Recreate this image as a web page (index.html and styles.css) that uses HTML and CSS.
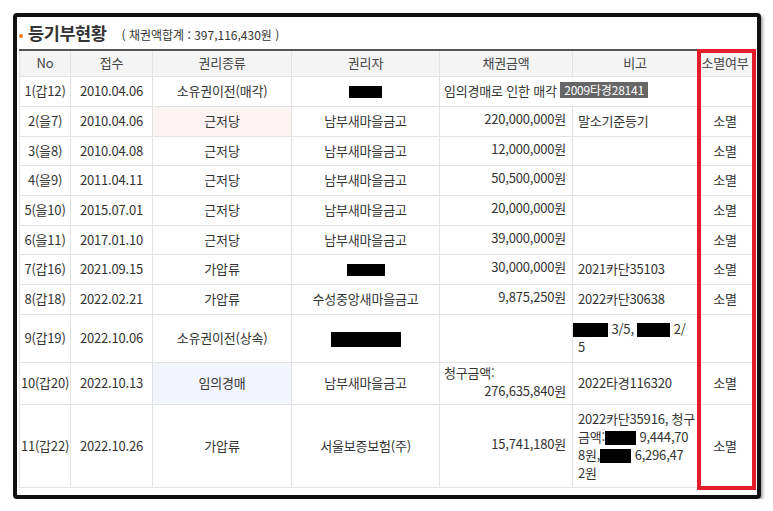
FILE: index.html
```html
<!DOCTYPE html>
<html lang="ko">
<head>
<meta charset="utf-8">
<title>등기부현황</title>
<link rel="stylesheet" href="styles.css">
</head>
<body>
<div class="frame">
  <div class="title">
    <span class="dot"></span>
    <h2 class="title-main">등기부현황</h2>
    <span class="title-sub">( 채권액합계 : 397,116,430원 )</span>
  </div>
  <table class="reg">
    <colgroup>
      <col class="c-no"><col class="c-date"><col class="c-kind"><col class="c-holder"><col class="c-amt"><col class="c-note"><col class="c-ext">
    </colgroup>
    <thead>
      <tr class="head"><th>No</th><th>접수</th><th>권리종류</th><th>권리자</th><th>채권금액</th><th>비고</th><th>소멸여부</th></tr>
    </thead>
    <tbody>
      <tr><td>1(갑12)</td><td>2010.04.06</td><td>소유권이전(매각)</td><td><span class="redact r1"></span></td><td colspan="2" class="left">임의경매로 인한 매각 <span class="badge">2009타경28141</span></td><td></td></tr>
      <tr><td>2(을7)</td><td>2010.04.06</td><td class="pink">근저당</td><td>남부새마을금고</td><td class="amt">220,000,000원</td><td class="note">말소기준등기</td><td>소멸</td></tr>
      <tr class="h29"><td>3(을8)</td><td>2010.04.08</td><td>근저당</td><td>남부새마을금고</td><td class="amt">12,000,000원</td><td class="note"></td><td>소멸</td></tr>
      <tr><td>4(을9)</td><td>2011.04.11</td><td>근저당</td><td>남부새마을금고</td><td class="amt">50,500,000원</td><td class="note"></td><td>소멸</td></tr>
      <tr><td>5(을10)</td><td>2015.07.01</td><td>근저당</td><td>남부새마을금고</td><td class="amt">20,000,000원</td><td class="note"></td><td>소멸</td></tr>
      <tr class="h29"><td>6(을11)</td><td>2017.01.10</td><td>근저당</td><td>남부새마을금고</td><td class="amt">39,000,000원</td><td class="note"></td><td>소멸</td></tr>
      <tr><td>7(갑16)</td><td>2021.09.15</td><td>가압류</td><td><span class="redact r7"></span></td><td class="amt">30,000,000원</td><td class="note">2021카단35103</td><td>소멸</td></tr>
      <tr><td>8(갑18)</td><td>2022.02.21</td><td>가압류</td><td>수성중앙새마을금고</td><td class="amt">9,875,250원</td><td class="note">2022카단30638</td><td>소멸</td></tr>
      <tr class="h48"><td>9(갑19)</td><td>2022.10.06</td><td>소유권이전(상속)</td><td><span class="redact r9"></span></td><td class="amt"></td><td class="note multi"><span class="redact n9a"></span> 3/5, <span class="redact n9b"></span> 2/<br>5</td><td></td></tr>
      <tr class="h42"><td>10(갑20)</td><td>2022.10.13</td><td class="blue">임의경매</td><td>남부새마을금고</td><td class="amt claim"><div class="claim-label">청구금액:</div><div>276,635,840원</div></td><td class="note">2022타경116320</td><td>소멸</td></tr>
      <tr class="h83"><td>11(갑22)</td><td>2022.10.26</td><td>가압류</td><td>서울보증보험(주)</td><td class="amt">15,741,180원</td><td class="note multi">2022카단35916, 청구<br>금액:<span class="redact n11"></span> 9,444,70<br>8원,<span class="redact n11"></span> 6,296,47<br>2원</td><td>소멸</td></tr>
    </tbody>
  </table>
  <div class="highlight"></div>
</div>
</body>
</html>
```

FILE: styles.css
```css
body {
  margin: 0;
  background: #fff;
  font-family: "Noto Sans CJK KR", "Noto Sans", sans-serif;
  color: #333;
}

.frame {
  position: relative;
  box-sizing: border-box;
  width: 748px;
  height: 486px;
  margin: 13px 0 0 13px;
  padding: 0 0 0 2px;
  border: 4px solid #111;
  border-radius: 4px;
  box-shadow: 2px 2px 3px rgba(0, 0, 0, 0.35);
}

.title {
  display: flex;
  align-items: baseline;
  height: 32px;
  box-sizing: border-box;
  padding-top: 5px;
}

.dot {
  align-self: flex-start;
  width: 4px;
  height: 4px;
  margin: 12px 5px 0 0;
  border-radius: 50%;
  background: #f07a24;
}

.title-main {
  margin: 0;
  font-size: 17.5px;
  line-height: 22px;
  font-weight: bold;
  color: #333;
  letter-spacing: -0.4px;
}

.title-sub {
  margin-left: 15px;
  font-size: 12px;
  color: #333;
}

.reg {
  width: 733px;
  border-collapse: collapse;
  table-layout: fixed;
  font-size: 13px;
  letter-spacing: -0.2px;
  line-height: 18px;
}

.c-no { width: 51px; }
.c-date { width: 82px; }
.c-kind { width: 139px; }
.c-holder { width: 148px; }
.c-amt { width: 133px; }
.c-note { width: 125px; }
.c-ext { width: 55px; }

.reg tr { height: 30px; }
.reg tr.head { height: 26px; }
.reg tr.h29 { height: 29px; }
.reg tr.h48 { height: 48px; }
.reg tr.h42 { height: 42px; }
.reg tr.h83 { height: 83px; }

.reg th,
.reg td {
  border: 1px solid #e2e2e2;
  padding: 0;
  text-align: center;
  vertical-align: middle;
  white-space: nowrap;
}

.reg thead th {
  background: #f4f4f4;
  border-top: 2px solid #555;
  font-weight: normal;
  color: #444;
}

.reg td.left {
  text-align: left;
  padding-left: 4px;
}

.reg td.amt {
  text-align: right;
  padding: 0 6px 4px 0;
}

.reg td.note {
  text-align: left;
  padding-left: 5px;
}

.reg td.multi {
  white-space: normal;
  line-height: 18px;
}

.reg td.claim {
  vertical-align: top;
  padding-top: 1px;
}

.claim-label {
  text-align: left;
  padding-left: 4px;
}

.pink { background: #fdf3f3; }
.blue { background: #f3f5fc; }

.badge {
  display: inline-block;
  padding: 0 4px;
  background: #666;
  color: #fff;
  font-size: 12px;
  line-height: 16px;
  letter-spacing: -0.2px;
  vertical-align: 1px;
}

.redact {
  display: inline-block;
  background: #000;
  vertical-align: middle;
}

.r1 { width: 33px; height: 12px; }
.r7 { width: 38px; height: 12px; }
.r9 { width: 70px; height: 15px; margin-top: 2px; }
.n9a { width: 35px; height: 14px; margin-left: -5px; }
.n9b { width: 33px; height: 14px; }
.n11 { width: 31px; height: 14px; }

.highlight {
  position: absolute;
  left: 680px;
  top: 32px;
  width: 59px;
  height: 441px;
  box-sizing: border-box;
  border: 4px solid #e51d2a;
}
```
